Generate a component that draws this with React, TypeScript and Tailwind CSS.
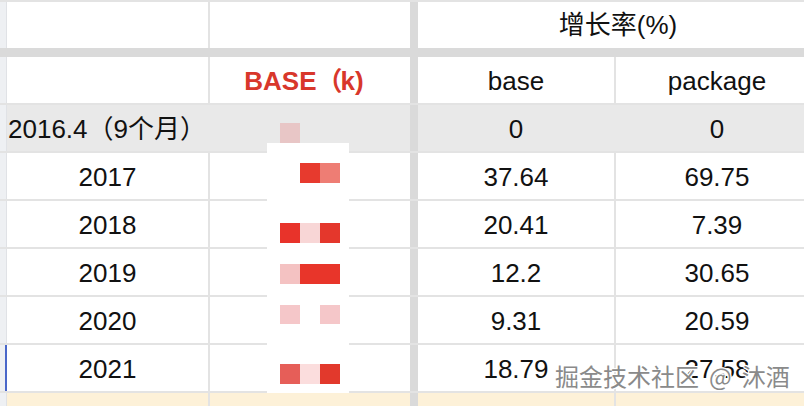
import React from "react";

const LINE = "bg-[#e3e3e3]";
const THICK = "bg-[#dadada]";

type RowProps = {
  a?: React.ReactNode;
  b?: React.ReactNode;
  c?: React.ReactNode;
  d?: React.ReactNode;
  bg?: string;
  aLeft?: boolean;
  blue?: boolean;
};

function Row({ a, b, c, d, bg = "bg-white", aLeft, blue }: RowProps) {
  return (
    <div className="flex h-[48px] border-b-2 border-[#e3e3e3] shrink-0">
      <div
        className={`w-[7px] shrink-0 bg-[#eef0f3] ${
          blue ? "border-r-2 border-[#4a67c9]" : "border-r border-[#e0e2e6]"
        }`}
      />
      <div
        className={`w-[201px] shrink-0 flex items-center pt-[2px] ${
          aLeft ? "justify-start pl-[1px]" : "justify-center"
        } ${bg} whitespace-nowrap overflow-visible`}
      >
        {a}
      </div>
      <div className={`w-[2px] shrink-0 ${bg === "bg-white" ? LINE : bg}`} />
      <div className={`w-[200px] shrink-0 flex items-center justify-center pt-[2px] ${bg}`}>{b}</div>
      <div className={`w-[8px] shrink-0 ${THICK}`} />
      <div className={`w-[196px] shrink-0 flex items-center justify-center pt-[2px] ${bg}`}>{c}</div>
      <div className={`w-[2px] shrink-0 ${bg === "bg-white" ? LINE : bg}`} />
      <div className={`w-[202px] shrink-0 flex items-center justify-center pt-[2px] ${bg}`}>{d}</div>
    </div>
  );
}

const blocks: { x: number; y: number; w: number; h: number; c: string }[] = [
  { x: 280, y: 123, w: 20, h: 20, c: "#e8c6c6" },
  { x: 300, y: 163, w: 20, h: 20, c: "#e73a2e" },
  { x: 320, y: 163, w: 20, h: 20, c: "#ee7d74" },
  { x: 280, y: 223, w: 20, h: 20, c: "#e8332a" },
  { x: 300, y: 223, w: 20, h: 20, c: "#f8d6d6" },
  { x: 320, y: 223, w: 20, h: 20, c: "#e4372c" },
  { x: 280, y: 264, w: 20, h: 20, c: "#f4c2c2" },
  { x: 300, y: 264, w: 40, h: 20, c: "#e8352a" },
  { x: 280, y: 305, w: 20, h: 19, c: "#f5c7c9" },
  { x: 320, y: 305, w: 20, h: 19, c: "#f5c7c9" },
  { x: 280, y: 364, w: 20, h: 20, c: "#e65e58" },
  { x: 300, y: 364, w: 20, h: 20, c: "#fbdddd" },
  { x: 320, y: 364, w: 20, h: 20, c: "#e2392c" },
];

export default function App() {
  return (
    <div
      className="relative w-[804px] h-[406px] overflow-hidden bg-[#e3e3e3] text-[26px] text-[#111]"
      style={{ fontFamily: '"Liberation Sans", Arial, "Noto Sans CJK SC", sans-serif' }}
    >
      <div className="flex flex-col pt-[2px] w-[818px]">
        {/* header row 1 */}
        <div className="flex h-[46px] shrink-0">
          <div className="w-[7px] shrink-0 bg-[#eef0f3] border-r border-[#e0e2e6]" />
          <div className="w-[201px] shrink-0 bg-white" />
          <div className={`w-[2px] shrink-0 ${LINE}`} />
          <div className="w-[200px] shrink-0 bg-white" />
          <div className={`w-[8px] shrink-0 ${THICK}`} />
          <div className="w-[400px] shrink-0 bg-white flex items-center justify-center pt-[1px]">
            增长率(%)
          </div>
        </div>
        <div className={`h-[9px] shrink-0 ${THICK}`} />
        {/* header row 2 */}
        <Row
          b={
            <span className="font-bold text-[#d8372b] pr-[12px]">
              BASE<span className="tracking-[-2px]">（</span>k)
            </span>
          }
          c="base"
          d="package"
        />
        <Row a={<span>2016.4（9个月）</span>} aLeft bg="bg-[#e9e9e9]" c="0" d="0" />
        <Row a="2017" c="37.64" d="69.75" />
        <Row a="2018" c="20.41" d="7.39" />
        <Row a="2019" c="12.2" d="30.65" />
        <Row a="2020" c="9.31" d="20.59" />
        <Row a="2021" c="18.79" d="27.58" blue />
        {/* yellow row */}
        <div className="flex h-[20px] shrink-0">
          <div className="w-[7px] shrink-0 bg-[#eef0f3] border-r border-[#e0e2e6]" />
          <div className="w-[201px] shrink-0 bg-[#fdf1d8]" />
          <div className={`w-[2px] shrink-0 ${LINE}`} />
          <div className="w-[200px] shrink-0 bg-[#fdf1d8]" />
          <div className={`w-[8px] shrink-0 ${THICK}`} />
          <div className="w-[196px] shrink-0 bg-[#fdf1d8]" />
          <div className={`w-[2px] shrink-0 ${LINE}`} />
          <div className="w-[202px] shrink-0 bg-[#fdf1d8]" />
        </div>
      </div>

      {/* mosaic overlay */}
      <div className="absolute left-[267px] top-[143px] w-[82px] h-[250px] bg-white" />
      {blocks.map((b, i) => (
        <div
          key={i}
          className="absolute"
          style={{ left: b.x, top: b.y, width: b.w, height: b.h, background: b.c }}
        />
      ))}

      {/* watermark */}
      <div
        className="absolute left-[555px] top-[364px] flex text-[24px] leading-none text-[#8a8a8a] whitespace-nowrap"
        style={{
          fontFamily: '"Noto Sans CJK SC", sans-serif',
          textShadow:
            "1px 0 #fff, -1px 0 #fff, 0 1px #fff, 0 -1px #fff, 1px 1px #fff, -1px -1px #fff, 1px -1px #fff, -1px 1px #fff",
        }}
      >
        <span>掘金技术社区</span>
        <span className="ml-[10px]">@</span>
        <span className="ml-[10px]">沐酒</span>
      </div>
    </div>
  );
}
